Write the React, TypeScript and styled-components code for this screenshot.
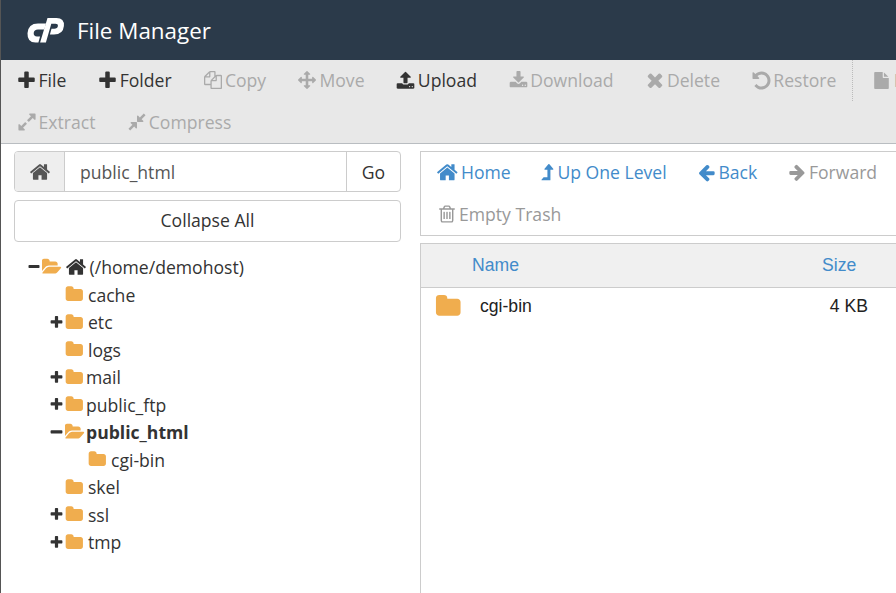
import React from 'react';
import styled, { createGlobalStyle } from 'styled-components';

const GlobalStyle = createGlobalStyle`
  html, body {
    margin: 0;
    padding: 0;
    height: 100%;
    overflow: hidden;
    background: #ffffff;
  }
  #root {
    height: 100%;
  }
`;

// font awesome 4 glyphs, all on a 1792 grid
const glyphs: { [key: string]: string } = {
  plus: 'M1600 736v192q0 40-28 68t-68 28h-416v416q0 40-28 68t-68 28h-192q-40 0-68-28t-28-68v-416h-416q-40 0-68-28t-28-68v-192q0-40 28-68t68-28h416v-416q0-40 28-68t68-28h192q40 0 68 28t28 68v416h416q40 0 68 28t28 68z',
  minus: 'M1600 736v192q0 40-28 68t-68 28h-1216q-40 0-68-28t-28-68v-192q0-40 28-68t68-28h1216q40 0 68 28t28 68z',
  copy: 'M1696 384q40 0 68 28t28 68v1216q0 40-28 68t-68 28h-960q-40 0-68-28t-28-68v-288h-544q-40 0-68-28t-28-68v-672q0-40 20-88t48-76l408-408q28-28 76-48t88-20h416q40 0 68 28t28 68v328q68-40 128-40h416zm-544 213l-299 299h299v-299zm-640-384l-299 299h299v-299zm196 647l316-316v-416h-384v416q0 40-28 68t-68 28h-416v640h512v-256q0-40 20-88t48-76zm956 804v-1152h-384v416q0 40-28 68t-68 28h-416v640h896z',
  move: 'M1792 896q0 26-19 45l-256 256q-19 19-45 19t-45-19-19-45v-128h-384v384h128q26 0 45 19t19 45-19 45l-256 256q-19 19-45 19t-45-19l-256-256q-19-19-19-45t19-45 45-19h128v-384h-384v128q0 26-19 45t-45 19-45-19l-256-256q-19-19-19-45t19-45l256-256q19-19 45-19t45 19 19 45v128h384v-384h-128q-26 0-45-19t-19-45 19-45l256-256q19-19 45-19t45 19l256 256q19 19 19 45t-19 45-45 19h-128v384h384v-128q0-26 19-45t45-19 45 19l256 256q19 19 19 45z',
  upload: 'M1344 1472q0-26-19-45t-45-19-45 19-19 45 19 45 45 19 45-19 19-45zm256 0q0-26-19-45t-45-19-45 19-19 45 19 45 45 19 45-19 19-45zm128-224v320q0 40-28 68t-68 28h-1472q-40 0-68-28t-28-68v-320q0-40 28-68t68-28h427q21 56 70.5 92t110.5 36h256q61 0 110.5-36t70.5-92h427q40 0 68 28t28 68zm-325-648q-17 40-59 40h-256v448q0 26-19 45t-45 19h-256q-26 0-45-19t-19-45v-448h-256q-42 0-59-40-17-39 14-69l448-448q18-19 45-19t45 19l448 448q31 30 14 69z',
  download: 'M1344 1344q0-26-19-45t-45-19-45 19-19 45 19 45 45 19 45-19 19-45zm256 0q0-26-19-45t-45-19-45 19-19 45 19 45 45 19 45-19 19-45zm128-224v320q0 40-28 68t-68 28h-1472q-40 0-68-28t-28-68v-320q0-40 28-68t68-28h465l135 136q58 56 136 56t136-56l136-136h464q40 0 68 28t28 68zm-325-569q17 41-14 70l-448 448q-18 19-45 19t-45-19l-448-448q-31-29-14-70 17-39 59-39h256v-448q0-26 19-45t45-19h256q26 0 45 19t19 45v448h256q42 0 59 39z',
  times: 'M1490 1322q0 40-28 68l-136 136q-28 28-68 28t-68-28l-294-294-294 294q-28 28-68 28t-68-28l-136-136q-28-28-28-68t28-68l294-294-294-294q-28-28-28-68t28-68l136-136q28-28 68-28t68 28l294 294 294-294q28-28 68-28t68 28l136 136q28 28 28 68t-28 68l-294 294 294 294q28 28 28 68z',
  undo: 'M1664 896q0 156-61 298t-164 245-245 164-298 61q-172 0-327-72.5t-264-204.5q-7-10-6.5-22.5t8.5-20.5l137-138q10-9 25-9 16 2 23 12 73 95 179 147t225 52q104 0 198.5-40.5t163.5-109.5 109.5-163.5 40.5-198.5-40.5-198.5-109.5-163.5-163.5-109.5-198.5-40.5q-98 0-188 35.5t-160 101.5l137 138q31 30 14 69-17 40-59 40h-448q-26 0-45-19t-19-45v-448q0-42 40-59 39-17 69 14l130 129q107-101 244.5-156.5t284.5-55.5q156 0 298 61t245 164 164 245 61 298z',
  file: 'M1152 512v-472q22 14 36 28l408 408q14 14 28 36h-472zm-128 32q0 40 28 68t68 28h544v1056q0 40-28 68t-68 28h-1344q-40 0-68-28t-28-68v-1600q0-40 28-68t68-28h800v544z',
  expand: 'M883 1056q0 13-10 23l-332 332 144 144q19 19 19 45t-19 45-45 19h-448q-26 0-45-19t-19-45v-448q0-26 19-45t45-19 45 19l144 144 332-332q10-10 23-10t23 10l114 114q10 10 10 23zm781-864v448q0 26-19 45t-45 19-45-19l-144-144-332 332q-10 10-23 10t-23-10l-114-114q-10-10-10-23t10-23l332-332-144-144q-19-19-19-45t19-45 45-19h448q26 0 45 19t19 45z',
  compress: 'M896 960v448q0 26-19 45t-45 19-45-19l-144-144-332 332q-10 10-23 10t-23-10l-114-114q-10-10-10-23t10-23l332-332-144-144q-19-19-19-45t19-45 45-19h448q26 0 45 19t19 45zm755-672q0 13-10 23l-332 332 144 144q19 19 19 45t-19 45-45 19h-448q-26 0-45-19t-19-45v-448q0-26 19-45t45-19 45 19l144 144 332-332q10-10 23-10t23 10l114 114q10 10 10 23z',
  home: 'M1472 992v480q0 26-19 45t-45 19h-384v-384h-256v384h-384q-26 0-45-19t-19-45v-480q0-1 .5-3t.5-3l575-474 575 474q1 2 1 6zm223-69l-62 74q-8 9-21 11h-3q-13 0-21-7l-692-577-692 577q-12 8-24 7-13-2-21-11l-62-74q-8-10-7-23.5t11-21.5l719-599q32-26 76-26t76 26l244 204v-195q0-14 9-23t23-9h192q14 0 23 9t9 23v408l219 182q10 8 11 21.5t-7 23.5z',
  levelUp: 'M1395 635q-16 33-58 33h-192v864q0 14-9 23t-23 9h-704q-21 0-29-18-8-20 4-35l160-192q9-11 25-11h320v-640h-192q-40 0-58-33-17-33 5-64l320-384q19-22 49-22t49 22l320 384q22 31 5 64z',
  arrowLeft: 'M1664 896v128q0 53-32.5 90.5t-84.5 37.5h-704l293 294q38 36 38 90t-38 90l-75 76q-37 37-90 37-52 0-91-37l-651-652q-37-37-37-90 0-52 37-91l651-650q38-38 91-38 52 0 90 38l75 74q38 38 38 91t-38 91l-293 293h704q52 0 84.5 37.5t32.5 90.5z',
  arrowRight: 'M1600 960q0 54-37 91l-651 651q-39 37-91 37-51 0-90-37l-75-75q-38-38-38-91t38-91l293-293h-704q-52 0-84.5-37.5t-32.5-90.5v-128q0-53 32.5-90.5t84.5-37.5h704l-293-294q-38-36-38-90t38-90l75-75q38-38 90-38 53 0 91 38l651 651q37 35 37 90z',
  trash: 'M704 736v576q0 14-9 23t-23 9h-64q-14 0-23-9t-9-23v-576q0-14 9-23t23-9h64q14 0 23 9t9 23zm256 0v576q0 14-9 23t-23 9h-64q-14 0-23-9t-9-23v-576q0-14 9-23t23-9h64q14 0 23 9t9 23zm256 0v576q0 14-9 23t-23 9h-64q-14 0-23-9t-9-23v-576q0-14 9-23t23-9h64q14 0 23 9t9 23zm128 724v-948h-896v948q0 22 7 40.5t14.5 27 10.5 8.5h832q3 0 10.5-8.5t14.5-27 7-40.5zm-672-1076h448l-48-117q-7-9-17-11h-317q-10 2-17 11zm928 32v64q0 14-9 23t-23 9h-96v948q0 83-47 143.5t-113 60.5h-832q-66 0-113-58.5t-47-141.5v-952h-96q-14 0-23-9t-9-23v-64q0-14 9-23t23-9h309l70-167q15-37 54-63t79-26h320q40 0 79 26t54 63l70 167h309q14 0 23 9t9 23z',
  folder: 'M1728 608v704q0 92-66 158t-158 66h-1216q-92 0-158-66t-66-158v-960q0-92 66-158t158-66h320q92 0 158 66t66 158v32h672q92 0 158 66t66 158z',
  folderOpen: 'M1845 931q0 35-35 74l-336 396q-43 51-120.5 86.5t-143.5 35.5h-1088q-34 0-60.5-13t-26.5-43q0-35 35-74l336-396q43-51 120.5-86.5t143.5-35.5h1088q34 0 60.5 13t26.5 43zm-343-344v160h-832q-94 0-197 47.5t-164 119.5l-337 396-5 6q0-4-.5-12.5t-.5-12.5v-960q0-92 66-158t158-66h320q92 0 158 66t66 158v32h544q92 0 158 66t66 158z',
};

const Page = styled.div`
  height: 100%;
  border-left: 1px solid #555555;
  box-sizing: border-box;
  display: flex;
  flex-direction: column;
  overflow: hidden;
  font-family: 'Open Sans', sans-serif;
  color: #333333;
`;

const Header = styled.header`
  flex: none;
  height: 60px;
  background: #2b3a4a;
  display: flex;
  align-items: center;
  padding-left: 26px;
  gap: 12px;
`;

const Title = styled.h1`
  margin: 0;
  font-size: 22.4px;
  font-weight: 400;
  color: #ffffff;
`;

const Toolbar = styled.div`
  flex: none;
  height: 84px;
  background: #e8e8e8;
  border-bottom: 1px solid #b9bdc1;
  box-sizing: border-box;
  padding-left: 15px;
`;

const ToolRow = styled.div`
  height: 42px;
  box-sizing: border-box;
  padding-bottom: 2px;
  display: flex;
  align-items: center;
  white-space: nowrap;
`;

const ToolButton = styled.span<{ $off?: boolean }>`
  flex: none;
  display: inline-flex;
  align-items: center;
  gap: 1.5px;
  margin-right: 30.8px;
  font-size: 17.6px;
  color: ${(p) => (p.$off ? '#aaaaaa' : '#333333')};
`;

const ToolDivider = styled.span`
  flex: none;
  align-self: flex-start;
  height: 41px;
  border-left: 1px dotted #bbbbbb;
  margin: 0 18px 0 -15px;
`;

const IconBox = styled.span<{ $width?: number }>`
  flex: none;
  width: ${(p) => p.$width || 21}px;
  display: flex;
  justify-content: center;
`;

const Glyph = styled.svg<{ $size?: number }>`
  flex: none;
  width: ${(p) => p.$size || 18}px;
  height: ${(p) => p.$size || 18}px;
  fill: currentColor;
`;

const Main = styled.div`
  flex: 1;
  display: flex;
  min-height: 0;
`;

const Sidebar = styled.aside`
  flex: none;
  width: 419px;
  box-sizing: border-box;
  padding: 7px 19px 0 13px;
`;

const PathGroup = styled.div`
  display: flex;
  height: 41px;
  border: 1px solid #cccccc;
  border-radius: 4px;
  box-sizing: border-box;
  font-size: 17.6px;
`;

const PathAddon = styled.span`
  width: 49px;
  flex: none;
  display: flex;
  align-items: center;
  justify-content: center;
  background: #eeeeee;
  border-right: 1px solid #cccccc;
  border-radius: 3px 0 0 3px;
  color: #555555;
`;

const PathInput = styled.span`
  flex: 1;
  display: flex;
  align-items: center;
  padding-left: 15px;
  color: #555555;
`;

const GoButton = styled.span`
  width: 53px;
  flex: none;
  display: flex;
  align-items: center;
  justify-content: center;
  border-left: 1px solid #cccccc;
`;

const CollapseButton = styled.div`
  margin-top: 8px;
  height: 42px;
  padding-bottom: 2px;
  border: 1px solid #cccccc;
  border-radius: 4px;
  box-sizing: border-box;
  display: flex;
  align-items: center;
  justify-content: center;
  font-size: 17.6px;
`;

const Tree = styled.ul`
  list-style: none;
  margin: 11.5px 0 0;
  padding: 0 0 0 14px;
  font-size: 17.6px;
`;

const TreeItem = styled.li<{ $indent?: number }>`
  height: 27.5px;
  display: flex;
  align-items: center;
  padding-left: ${(p) => p.$indent || 0}px;
`;

const Toggle = styled.span<{ $root?: boolean }>`
  flex: none;
  width: ${(p) => (p.$root ? 14 : 15)}px;
  display: flex;
  color: #333333;

  svg {
    margin-left: -1px;
  }
`;

const FolderMark = styled(Glyph)<{ $gap?: number }>`
  color: #f0ad4e;
  margin-right: ${(p) => p.$gap || 0}px;
`;

const TreeLabel = styled.span<{ $bold?: boolean }>`
  font-weight: ${(p) => (p.$bold ? 700 : 400)};
`;

const HomeLabel = styled.span`
  margin-left: 2.5px;
`;

const Content = styled.section`
  flex: 1;
  min-width: 0;
  padding-top: 7px;
  display: flex;
  flex-direction: column;
`;

const NavBox = styled.div`
  flex: none;
  height: 85px;
  border: 1px solid #cccccc;
  border-right: 0;
  box-sizing: border-box;
  padding-left: 16px;
  margin-bottom: 7px;
`;

const NavRow = styled.div`
  height: 42px;
  box-sizing: border-box;
  padding-bottom: 2px;
  display: flex;
  align-items: center;
  white-space: nowrap;
`;

const NavLink = styled.span<{ $off?: boolean }>`
  flex: none;
  display: inline-flex;
  align-items: center;
  gap: 3px;
  margin-right: 30.7px;
  font-size: 17.6px;
  color: ${(p) => (p.$off ? '#999999' : '#428bca')};
`;

const FileTable = styled.div`
  flex: 1;
  border-left: 1px solid #cccccc;
  font-family: 'Liberation Sans', Arial, sans-serif;
  font-size: 17.6px;
`;

const TableHead = styled.div`
  height: 45px;
  background: #f0f0f0;
  border-top: 1px solid #cccccc;
  border-bottom: 1px solid #cccccc;
  box-sizing: border-box;
  display: flex;
  align-items: center;
  color: #428bca;
`;

const NameHead = styled.span`
  margin-left: 51px;
  flex: 1;
`;

const SizeHead = styled.span`
  width: 74px;
  flex: none;
`;

const TableRow = styled.div`
  height: 36px;
  display: flex;
  align-items: center;
  padding-left: 14px;
  color: #222222;
`;

const RowName = styled.span`
  flex: 1;
  margin-left: 18.5px;
`;

const RowSize = styled.span`
  flex: none;
  white-space: nowrap;
  margin-right: 28px;
`;

const Icon = ({ name, size }: { name: string; size?: number }) => (
  <Glyph $size={size} viewBox="0 0 1792 1792">
    <path d={glyphs[name]} />
  </Glyph>
);

const Logo = () => (
  <svg width="38" height="27" viewBox="26.5 18.5 38 27" fill="#ffffff">
    <path d="M45.5 25 L43.8 31 H37.5 Q33.5 31 33.2 34.6 Q33 38 36.5 38 H39.6 L37.9 44 H35 Q26.6 44 27 34.8 Q27.6 25 37.5 25 Z" />
    <path d="M47 19.5 H56 Q64 19.5 63.4 27.5 Q62.6 36 53.5 36 H49.4 L51 30.2 H53.8 Q57 30.2 57.4 27.6 Q57.6 25.3 55 25.3 H50.8 L45.4 44 H39.6 Z" />
  </svg>
);

const tools = [
  { label: 'File', icon: 'plus', size: 21 },
  { label: 'Folder', icon: 'plus', size: 21 },
  { label: 'Copy', icon: 'copy', size: 18, off: true },
  { label: 'Move', icon: 'move', size: 18, off: true },
  { label: 'Upload', icon: 'upload', size: 19 },
  { label: 'Download', icon: 'download', size: 19, off: true },
  { label: 'Delete', icon: 'times', size: 22, off: true },
  { label: 'Restore', icon: 'undo', size: 21, off: true },
];

const folders = [
  { label: 'cache', indent: 37, gap: 4.4 },
  { label: 'etc', toggle: 'plus', indent: 22, gap: 4.4 },
  { label: 'logs', indent: 37, gap: 4.4 },
  { label: 'mail', toggle: 'plus', indent: 22, gap: 2.4 },
  { label: 'public_ftp', toggle: 'plus', indent: 22, gap: 2.4 },
  { label: 'public_html', toggle: 'minus', indent: 22, gap: 1, open: true, bold: true },
  { label: 'cgi-bin', indent: 60, gap: 4.4 },
  { label: 'skel', indent: 37, gap: 4.4 },
  { label: 'ssl', toggle: 'plus', indent: 22, gap: 4.4 },
  { label: 'tmp', toggle: 'plus', indent: 22, gap: 4.4 },
];

const App: React.FC = () => {
  return (
    <Page>
      <GlobalStyle />
      <Header>
        <Logo />
        <Title>File Manager</Title>
      </Header>

      <Toolbar>
        <ToolRow>
          {tools.map((tool) => (
            <ToolButton key={tool.label} $off={tool.off}>
              <IconBox>
                <Icon name={tool.icon} size={tool.size} />
              </IconBox>
              {tool.label}
            </ToolButton>
          ))}
          <ToolDivider />
          <ToolButton $off>
            <IconBox>
              <Icon name="file" size={17} />
            </IconBox>
            Rename
          </ToolButton>
        </ToolRow>
        <ToolRow>
          <ToolButton $off>
            <IconBox>
              <Icon name="expand" size={20} />
            </IconBox>
            Extract
          </ToolButton>
          <ToolButton $off>
            <IconBox>
              <Icon name="compress" size={20} />
            </IconBox>
            Compress
          </ToolButton>
        </ToolRow>
      </Toolbar>

      <Main>
        <Sidebar>
          <PathGroup>
            <PathAddon>
              <Icon name="home" size={22} />
            </PathAddon>
            <PathInput>public_html</PathInput>
            <GoButton>Go</GoButton>
          </PathGroup>
          <CollapseButton>Collapse All</CollapseButton>

          <Tree>
            <TreeItem>
              <Toggle $root>
                <Icon name="minus" size={14} />
              </Toggle>
              <FolderMark $size={20} $gap={3} viewBox="0 0 1920 1792">
                <path d={glyphs.folderOpen} />
              </FolderMark>
              <Icon name="home" size={22} />
              <HomeLabel>(/home/demohost)</HomeLabel>
            </TreeItem>
            {folders.map((folder) => (
              <TreeItem key={folder.label} $indent={folder.indent}>
                {folder.toggle && (
                  <Toggle>
                    <Icon name={folder.toggle} size={15} />
                  </Toggle>
                )}
                <FolderMark
                  $size={folder.open ? 20 : 18.6}
                  $gap={folder.gap}
                  viewBox={folder.open ? '0 0 1920 1792' : '0 0 1792 1792'}
                >
                  <path d={folder.open ? glyphs.folderOpen : glyphs.folder} />
                </FolderMark>
                <TreeLabel $bold={folder.bold}>{folder.label}</TreeLabel>
              </TreeItem>
            ))}
          </Tree>
        </Sidebar>

        <Content>
          <NavBox>
            <NavRow>
              <NavLink>
                <IconBox $width={21}>
                  <Icon name="home" size={22.6} />
                </IconBox>
                Home
              </NavLink>
              <NavLink>
                <IconBox $width={13}>
                  <Icon name="levelUp" size={21} />
                </IconBox>
                Up One Level
              </NavLink>
              <NavLink>
                <IconBox $width={18}>
                  <Icon name="arrowLeft" size={19} />
                </IconBox>
                Back
              </NavLink>
              <NavLink $off>
                <IconBox $width={18}>
                  <Icon name="arrowRight" size={18.5} />
                </IconBox>
                Forward
              </NavLink>
            </NavRow>
            <NavRow>
              <NavLink $off>
                <IconBox $width={19}>
                  <Icon name="trash" size={20} />
                </IconBox>
                Empty Trash
              </NavLink>
            </NavRow>
          </NavBox>

          <FileTable>
            <TableHead>
              <NameHead>Name</NameHead>
              <SizeHead>Size</SizeHead>
            </TableHead>
            <TableRow>
              <FolderMark $size={26.5} viewBox="0 0 1792 1792">
                <path d={glyphs.folder} />
              </FolderMark>
              <RowName>cgi-bin</RowName>
              <RowSize>4 KB</RowSize>
            </TableRow>
          </FileTable>
        </Content>
      </Main>
    </Page>
  );
};

export default App;
